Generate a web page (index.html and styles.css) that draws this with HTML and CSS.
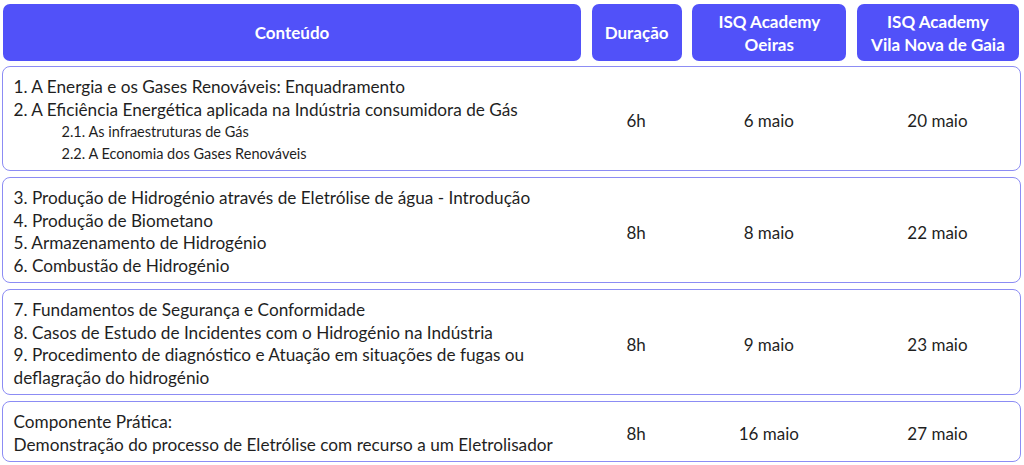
FILE: index.html
```html
<!DOCTYPE html>
<html lang="pt">
<head>
    <meta charset="UTF-8">
    <meta name="viewport" content="width=device-width, initial-scale=1.0">
    <title>Plano do Curso - ISQ Academy</title>
    <link rel="stylesheet" href="styles.css">
</head>
<body>
    <div class="schedule">
        <!-- Header -->
        <div class="head-row">
            <div class="head-cell">Conteúdo</div>
            <div class="head-cell">Duração</div>
            <div class="head-cell">ISQ Academy<br>Oeiras</div>
            <div class="head-cell">ISQ Academy<br>Vila Nova de Gaia</div>
        </div>

        <!-- Modules -->
        <div class="row">
            <div class="topics">
                <p>1. A Energia e os Gases Renováveis: Enquadramento</p>
                <p>2. A Eficiência Energética aplicada na Indústria consumidora de Gás</p>
                <p class="sub">2.1. As infraestruturas de Gás</p>
                <p class="sub">2.2. A Economia dos Gases Renováveis</p>
            </div>
            <div class="value">6h</div>
            <div class="value">6 maio</div>
            <div class="value">20 maio</div>
        </div>

        <div class="row">
            <div class="topics">
                <p>3. Produção de Hidrogénio através de Eletrólise de água - Introdução</p>
                <p>4. Produção de Biometano</p>
                <p>5. Armazenamento de Hidrogénio</p>
                <p>6. Combustão de Hidrogénio</p>
            </div>
            <div class="value">8h</div>
            <div class="value">8 maio</div>
            <div class="value">22 maio</div>
        </div>

        <div class="row">
            <div class="topics">
                <p>7. Fundamentos de Segurança e Conformidade</p>
                <p>8. Casos de Estudo de Incidentes com o Hidrogénio na Indústria</p>
                <p>9. Procedimento de diagnóstico e Atuação em situações de fugas ou deflagração do hidrogénio</p>
            </div>
            <div class="value">8h</div>
            <div class="value">9 maio</div>
            <div class="value">23 maio</div>
        </div>

        <div class="row">
            <div class="topics">
                <p>Componente Prática:</p>
                <p>Demonstração do processo de Eletrólise com recurso a um Eletrolisador</p>
            </div>
            <div class="value">8h</div>
            <div class="value">16 maio</div>
            <div class="value">27 maio</div>
        </div>
    </div>
</body>
</html>
```

FILE: styles.css
```css
body {
    font-family: 'Lato', 'Noto Sans', sans-serif;
    margin: 0;
    padding: 0;
    background-color: #ffffff;
    color: #1f1f1f;
}
.schedule {
    padding: 4px 5px 0 3px;
    display: flex;
    flex-direction: column;
    gap: 6px;
}
.head-row,
.row {
    display: grid;
    grid-template-columns: 578px 90px 154px 162px;
    column-gap: 10.67px;
}
.head-row {
    height: 57px;
    margin-bottom: -1px;
}
.head-cell {
    background-color: #5151f9;
    color: white;
    font-weight: bold;
    font-size: 17px;
    line-height: 23px;
    border-radius: 7px;
    display: flex;
    align-items: center;
    justify-content: center;
    text-align: center;
}
.row {
    border: 1.5px solid #8c8cf4;
    border-radius: 8px;
    padding: 9px 0 5px 0;
    margin-left: -1.5px;
    margin-right: -1.5px;
}
.topics {
    padding-left: 11px;
    font-size: 17.2px;
    line-height: 22.5px;
}
.topics p {
    margin: 0;
}
.topics .sub {
    font-size: 14.5px;
    line-height: 22px;
    padding-left: 48px;
}
.value {
    display: flex;
    align-items: center;
    justify-content: center;
    font-size: 17px;
}
```
